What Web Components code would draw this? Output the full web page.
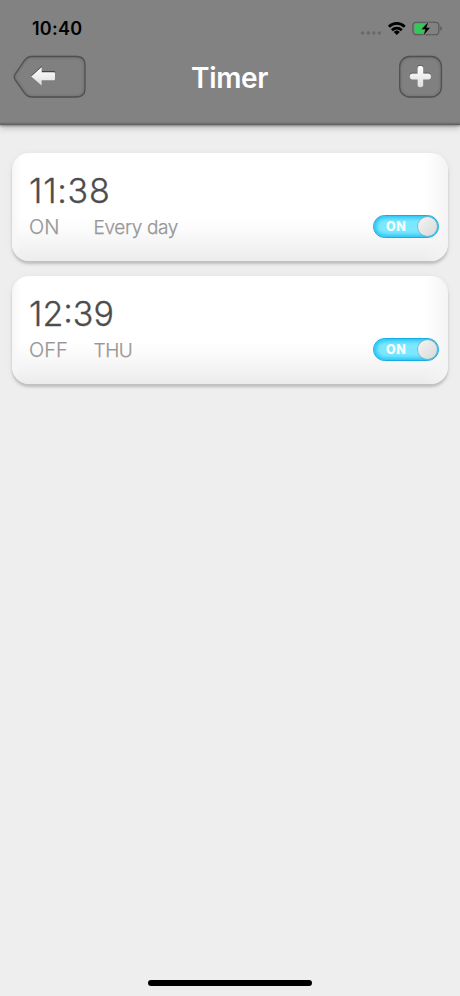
<!DOCTYPE html>
<html lang="en">
<head>
<meta charset="utf-8">
<title>Timer</title>
<style>html,body{margin:0;height:100%;background:#eee}body{font-family:Inter,"Liberation Sans",sans-serif}</style>
</head>
<body>
<timer-app></timer-app>
<script>
const define = (name, html, after) => customElements.define(name, class extends HTMLElement {
  constructor() {
    super();
    this.attachShadow({ mode: 'open' }).innerHTML = html;
  }
  connectedCallback() { if (after) after(this, this.shadowRoot); }
});

define('status-bar', `
<style>
:host{display:flex;justify-content:space-between;height:56px;box-sizing:border-box;padding:18px 17px 0 32px;color:#000}
.clock{font-size:18px;line-height:22px;font-weight:600;letter-spacing:.25px}
svg{display:block}
</style>
<span class="clock"><slot></slot></span>
<svg width="84" height="22" viewBox="359 18 84 22">
  <g fill="#6a6a6a"><circle cx="362.5" cy="33" r="1.8"/><circle cx="368.3" cy="33" r="1.8"/><circle cx="373.8" cy="33" r="1.8"/><circle cx="379.4" cy="33" r="1.8"/></g>
  <g fill="none" stroke="#000" stroke-width="2.8">
    <path d="M388.9 26.700a11.200 11.200 0 0 1 15.800 0"/><path d="M391.900 30.200a7 7 0 0 1 9.800 0"/>
  </g>
  <path d="M396.800 34.900l-3-3a4.300 4.300 0 0 1 6 0z" fill="#000"/>
  <rect x="412.900" y="22.200" width="26" height="12.600" rx="3.600" fill="none" stroke="#555" stroke-width="1.100"/>
  <path d="M440.400 26.300q1.500.4 1.500 2.200t-1.500 2.200z" fill="#555"/>
  <path d="M416.500 23.700h8.900v9.600h-8.900a2 2 0 0 1-2-2v-5.600a2 2 0 0 1 2-2z" fill="#35c759"/>
  <path d="M428.300 22l-6.500 7.300h3.800l-2 6 6.400-7.600h-3.700z" fill="#000" stroke="#828282" stroke-width="1.600" paint-order="stroke"/>
</svg>`);

define('back-button', `
<style>:host{display:block;width:73px;height:43px}svg{display:block}</style>
<svg width="73" height="43" viewBox="13 55 73 43">
  <defs><linearGradient id="g" x2="0" y2="1"><stop stop-color="#fff"/><stop offset="1" stop-color="#ddd"/></linearGradient>
  <filter id="b" x="-10%" y="-10%" width="120%" height="120%"><feGaussianBlur stdDeviation=".8"/></filter></defs>
  <path d="M32 57.200H76q8 0 8 8V88.200q0 8-8 8H32q-4 0-7-4L16 79.700q-2-2.700 0-5.700L25 61.200q3-4 7-4z" fill="#808080" stroke="#6a6a6a" stroke-width="1.400" filter="url(#b)"/>
  <path d="M32 56.500H76.500q8.500 0 8.500 8.500V88.500q0 8.500-8.500 8.500H32q-4.500 0-7.500-4L15.300 79.800q-2-2.800 0-5.800L24.500 60.500q3-4 7.500-4z" fill="none" stroke="#505050" stroke-width="1.300"/>
  <path d="M31.200 76.200L41.700 66.700V71.600H54.800V79.900H41.700V85.200z" fill="#444" transform="translate(0 -.7)"/>
  <path d="M31.200 76.400L41.700 67.100V72.300H53.800q1.200 0 1.200 1.200V79q0 1.200-1.200 1.200H41.700V85.400z" fill="url(#g)"/>
</svg>`);

define('add-button', `
<style>:host{display:block;width:44px;height:43px}svg{display:block}</style>
<svg width="44" height="43" viewBox="399 55 44 43">
  <defs><linearGradient id="g" x2="0" y2="1"><stop stop-color="#fff"/><stop offset="1" stop-color="#ddd"/></linearGradient>
  <filter id="b" x="-10%" y="-10%" width="120%" height="120%"><feGaussianBlur stdDeviation=".8"/></filter></defs>
  <rect x="400.400" y="57.200" width="40.200" height="39" rx="9.500" fill="#808080" stroke="#6a6a6a" stroke-width="1.400" filter="url(#b)"/>
  <rect x="399.700" y="56.500" width="41.700" height="40.500" rx="10" fill="none" stroke="#505050" stroke-width="1.300"/>
  <path d="M417.500 73.600V68.500q0-2.700 2.900-2.700t2.900 2.700v5.100h5q2.700 0 2.700 2.900t-2.700 2.900h-5v5.100q0 2.700-2.900 2.700t-2.900-2.700v-5.100h-5q-2.700 0-2.700-2.900t2.700-2.900z" fill="#444" transform="translate(0 -.9)"/>
  <path d="M417.500 73.600V68.500q0-2.700 2.900-2.700t2.900 2.700v5.100h5q2.700 0 2.700 2.900t-2.700 2.900h-5v5.100q0 2.700-2.900 2.700t-2.900-2.700v-5.100h-5q-2.700 0-2.700-2.900t2.700-2.900z" fill="url(#g)"/>
</svg>`);

define('nav-header', `
<style>
:host{display:block;height:125px;box-sizing:border-box;background:linear-gradient(#828282,#828282 122px,#696969 124px,#585858);box-shadow:0 1px 2px #888,0 2px 7px #aaa}
.row{display:grid;grid-template-columns:73px 1fr 44px;height:43px;padding:0 17px 0 13px;margin-top:-1px}
h1{margin:0;font-size:28px;line-height:43px;font-weight:600;color:#fff;text-align:center;letter-spacing:-.35px;padding:2px 26px 0 0}
</style>
<status-bar>10:40</status-bar>
<div class="row"><back-button></back-button><h1><slot></slot></h1><add-button></add-button></div>`);

define('toggle-switch', `
<style>
:host{display:flex;justify-content:space-between;align-items:center;box-sizing:border-box;width:66px;height:23px;border:1.5px solid #12aee4;border-radius:12px;background:#7ce8ff;box-shadow:inset 0 0 4px 2px #20c0f4;padding-left:12px}
b{font-size:12.500px;line-height:20px;font-weight:800;color:#f8feff;letter-spacing:.7px}
i{width:19.500px;height:19.500px;border-radius:50%;background:linear-gradient(135deg,#f4f4f4,#d9d9d9);box-shadow:0 0 0 .8px #8fa6b0;margin-right:.8px}
</style><b>ON</b><i></i>`);

define('timer-card', `
<style>
:host{display:grid;grid-template-columns:64.500px 1fr 66px;grid-template-rows:40px 30px;box-sizing:border-box;height:107.500px;padding:17.500px 9px 0 17px;border-radius:17px;
 background:linear-gradient(90deg,#f6f6f6,#f6f6f600 9px,#f6f6f600 calc(100% - 24px),#f4f4f4),linear-gradient(#fff 0,#fff 60%,#fafafa 74%,#ececec);box-shadow:0 3px 2.500px #c0c0c0,0 1px 6px #e0e0e0}
time{grid-column:1/-1;font-size:34px;line-height:40px;font-weight:300;color:#4c4c4c;letter-spacing:var(--time-spacing,0);-webkit-text-stroke:.3px}
span{font-size:20px;line-height:33px;font-weight:300;color:#979797;white-space:nowrap;-webkit-text-stroke:.25px}
.d{font-size:19px;letter-spacing:var(--days-spacing,0)}
toggle-switch{margin-top:4.500px}
</style>
<time></time><span class="s"></span><span class="d"></span><toggle-switch></toggle-switch>`,
(el, root) => {
  root.querySelector('time').textContent = el.getAttribute('time');
  root.querySelector('.s').textContent = el.getAttribute('state');
  root.querySelector('.d').textContent = el.getAttribute('days');
});

define('home-indicator', `<style>:host{display:block;width:164px;height:6px;border-radius:3px;background:#000;margin:auto auto 10.500px}</style>`);

define('timer-app', `
<style>
:host{display:flex;flex-direction:column;height:100vh;background:#eee}
main{display:flex;flex-direction:column;gap:15.500px;padding:28px 12px 0}
.daily{--time-spacing:.75px;--days-spacing:-.35px}
.weekly{--days-spacing:-.4px}
</style>
<nav-header>Timer</nav-header>
<main>
<timer-card class="daily" time="11:38" state="ON" days="Every day"></timer-card>
<timer-card class="weekly" time="12:39" state="OFF" days="THU"></timer-card>
</main>
<home-indicator></home-indicator>`);
</script>
</body>
</html>
